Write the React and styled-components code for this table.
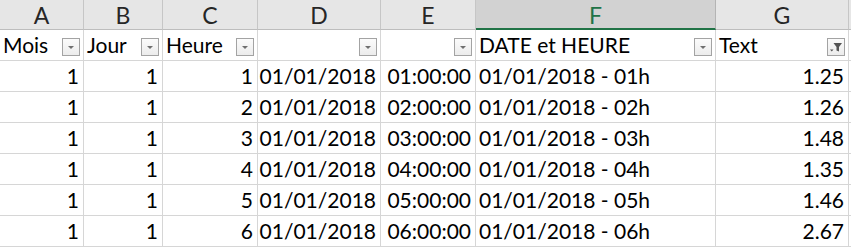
import React from "react";
import styled, { createGlobalStyle } from "styled-components";

const Global = createGlobalStyle`
  html, body { margin: 0; padding: 0; background: #ffffff; }
  body { font-family: Lato, "Open Sans", sans-serif; }
`;

const COLS = [
  { key: "A", width: 84 },
  { key: "B", width: 79 },
  { key: "C", width: 95 },
  { key: "D", width: 123 },
  { key: "E", width: 95 },
  { key: "F", width: 240 },
  { key: "G", width: 133 },
];

const Sheet = styled.div`
  display: grid;
  grid-template-columns: ${COLS.map((c) => c.width + "px").join(" ")} 1fr;
  grid-template-rows: 30px repeat(7, 31px);
  width: 851px;
  height: 247px;
  overflow: hidden;
  color: #000;
`;

const ColHeader = styled.div`
  box-sizing: border-box;
  display: flex;
  align-items: center;
  justify-content: center;
  background: ${(p) => (p.$selected ? "#d2d2d2" : "#e6e6e6")};
  border-right: 1px solid ${(p) => (p.$selected ? "#b4b4b4" : "#c6c6c6")};
  border-bottom: ${(p) => (p.$selected ? "2px solid #217346" : "1px solid #bdbdbd")};
  color: ${(p) => (p.$selected ? "#217346" : "#262626")};
  font-size: 23px;
  padding-top: ${(p) => (p.$selected ? "1px" : "0")};
`;

const Cell = styled.div`
  box-sizing: border-box;
  display: flex;
  align-items: flex-end;
  justify-content: ${(p) => (p.$align === "right" ? "flex-end" : "flex-start")};
  border-right: 1px solid #d6d6d6;
  border-bottom: 1px solid #d6d6d6;
  font-size: 21px;
  line-height: 30px;
  padding: 0 ${(p) => (p.$align === "right" ? "4px" : "3px")} 0 3px;
  white-space: nowrap;
  overflow: visible;
`;

const HeadLabel = styled.span`
  flex: 1;
  line-height: 30px;
`;

const FilterButton = styled.div`
  box-sizing: border-box;
  flex: none;
  width: 18px;
  height: 18px;
  margin: 0 0 4px 0;
  border: 1px solid #a3a3a3;
  background: linear-gradient(#fbfbfb, #ececec);
  display: flex;
  align-items: center;
  justify-content: center;
  align-self: flex-end;
`;

const Arrow = () => (
  <svg width="8" height="5" viewBox="0 0 8 5">
    <path d="M1 1 H7 L4 4 Z" fill="#6f6f6f" />
  </svg>
);

const Funnel = () => (
  <svg width="16" height="16" viewBox="0 0 16 16">
    <path d="M5.5 4 H14 L11 8 V12.5 L8.5 11.5 V8 Z" fill="#555555" />
    <path d="M2 10.5 H5.5 L3.75 12.5 Z" fill="#555555" />
  </svg>
);

const headers = [
  { label: "Mois" },
  { label: "Jour" },
  { label: "Heure" },
  { label: "" },
  { label: "" },
  { label: "DATE et HEURE" },
  { label: "Text", applied: true },
];

const values = ["1.25", "1.26", "1.48", "1.35", "1.46", "2.67"];

const rows = values.map((v, i) => {
  const h = String(i + 1).padStart(2, "0");
  return [
    { t: "1", a: "right" },
    { t: "1", a: "right" },
    { t: String(i + 1), a: "right" },
    { t: "01/01/2018", a: "right" },
    { t: `${h}:00:00`, a: "right" },
    { t: `01/01/2018 - ${h}h`, a: "left" },
    { t: v, a: "right" },
  ];
});

const Filler = styled.div`
  box-sizing: border-box;
  border-bottom: 1px solid ${(p) => (p.$head ? "#bdbdbd" : "#d6d6d6")};
  background: ${(p) => (p.$head ? "#e6e6e6" : "#ffffff")};
`;

export default function App() {
  return (
    <>
      <Global />
      <Sheet>
        {COLS.map((c) => (
          <ColHeader key={c.key} $selected={c.key === "F"}>
            {c.key}
          </ColHeader>
        ))}
        <Filler $head />
        {headers.map((h, i) => (
          <Cell key={"h" + i} $align="left">
            <HeadLabel>{h.label}</HeadLabel>
            <FilterButton>{h.applied ? <Funnel /> : <Arrow />}</FilterButton>
          </Cell>
        ))}
        <Filler />
        {rows.map((r, ri) => (
          <React.Fragment key={ri}>
            {r.map((c, ci) => (
              <Cell key={ci} $align={c.a}>
                {c.t}
              </Cell>
            ))}
            <Filler />
          </React.Fragment>
        ))}
      </Sheet>
    </>
  );
}
